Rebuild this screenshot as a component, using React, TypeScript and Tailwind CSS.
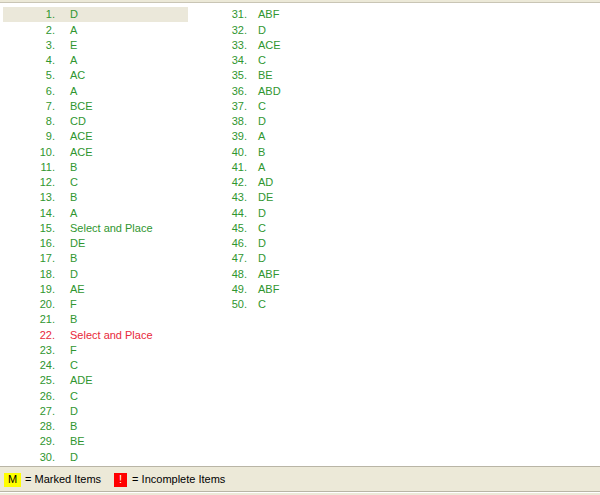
const left: [string, string, boolean?][] = [
  ["1.", "D"], ["2.", "A"], ["3.", "E"], ["4.", "A"], ["5.", "AC"],
  ["6.", "A"], ["7.", "BCE"], ["8.", "CD"], ["9.", "ACE"], ["10.", "ACE"],
  ["11.", "B"], ["12.", "C"], ["13.", "B"], ["14.", "A"], ["15.", "Select and Place"],
  ["16.", "DE"], ["17.", "B"], ["18.", "D"], ["19.", "AE"], ["20.", "F"],
  ["21.", "B"], ["22.", "Select and Place", true], ["23.", "F"], ["24.", "C"], ["25.", "ADE"],
  ["26.", "C"], ["27.", "D"], ["28.", "B"], ["29.", "BE"], ["30.", "D"],
];

const right: [string, string][] = [
  ["31.", "ABF"], ["32.", "D"], ["33.", "ACE"], ["34.", "C"], ["35.", "BE"],
  ["36.", "ABD"], ["37.", "C"], ["38.", "D"], ["39.", "A"], ["40.", "B"],
  ["41.", "A"], ["42.", "AD"], ["43.", "DE"], ["44.", "D"], ["45.", "C"],
  ["46.", "D"], ["47.", "D"], ["48.", "ABF"], ["49.", "ABF"], ["50.", "C"],
];

export default function App() {
  return (
    <div className="w-[600px] h-[495px] flex flex-col bg-white text-[11px] font-['Liberation_Sans',Arial,sans-serif] overflow-hidden">
      <div className="h-[3px] bg-[#ece9d8] border-b border-[#c9c5b5]" />

      <div className="flex-1 flex pt-[4px] pl-[3px]">
        {/* first column */}
        <div className="w-[185px] flex flex-col">
          {left.map(([n, a, red], i) => (
            <div
              key={n}
              className={`h-[15.25px] flex items-center ${i === 0 ? "bg-[#ebe8da]" : ""} ${red ? "text-[#e8283a]" : "text-[#2f962f]"}`}
            >
              <span className="w-[52px] text-right">{n}</span>
              <span className="ml-[15px] whitespace-nowrap">{a}</span>
            </div>
          ))}
        </div>

        {/* second column */}
        <div className="w-[185px] ml-[2px] flex flex-col">
          {right.map(([n, a]) => (
            <div key={n} className="h-[15.25px] flex items-center text-[#2f962f]">
              <span className="w-[57px] text-right">{n}</span>
              <span className="ml-[11px]">{a}</span>
            </div>
          ))}
        </div>
      </div>

      <div className="h-[26px] mb-[1px] border-t border-b border-[#b9b5a6] bg-[#ece9d8] flex items-center pl-[4px] pt-[1px] text-black">
        <span className="w-[17px] h-[14px] bg-[#ffff00] flex items-center justify-center">M</span>
        <span className="ml-[4px]">= Marked Items</span>
        <span className="ml-[13px] w-[13px] h-[14px] bg-[#ff0000] text-white flex items-center justify-center">!</span>
        <span className="ml-[5px]">= Incomplete Items</span>
      </div>
      <div className="h-[2px] bg-[#ece9d8]" />
    </div>
  );
}
